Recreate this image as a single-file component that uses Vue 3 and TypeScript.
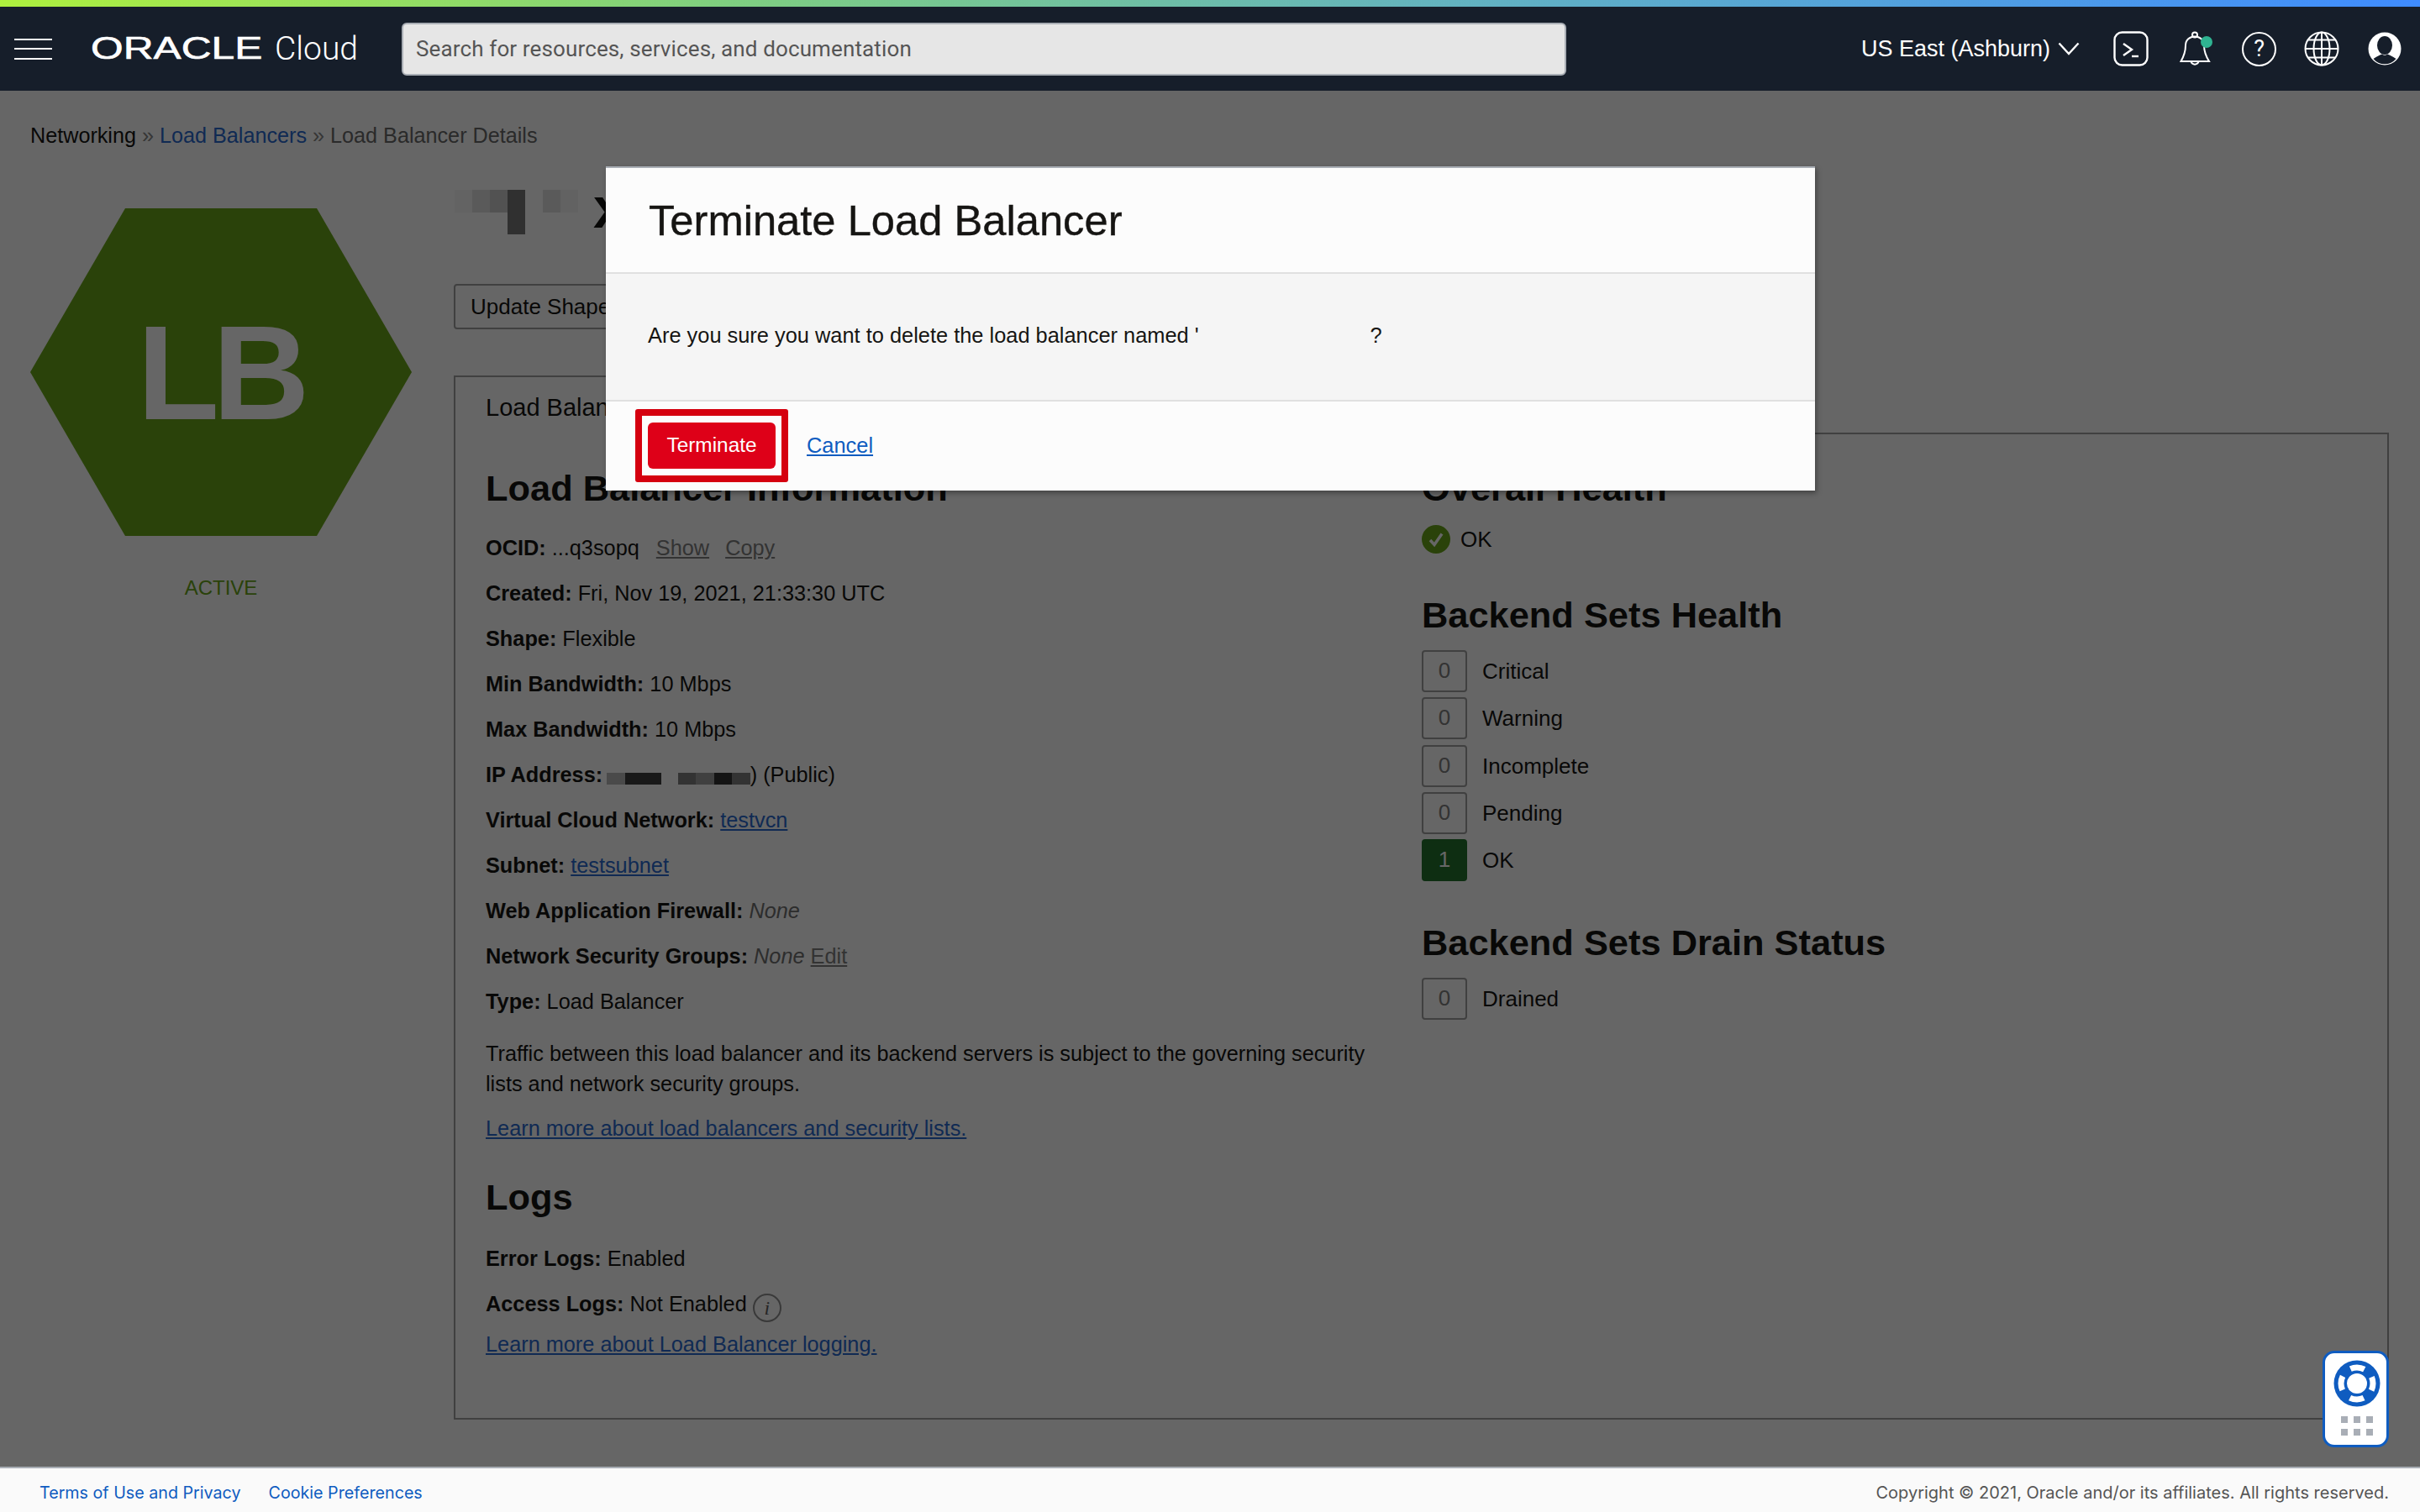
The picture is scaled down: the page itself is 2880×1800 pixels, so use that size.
<script setup lang="ts">
interface Health {
  count: number
  label: string
  ok?: boolean
}

const backendHealth: Health[] = [
  { count: 0, label: 'Critical' },
  { count: 0, label: 'Warning' },
  { count: 0, label: 'Incomplete' },
  { count: 0, label: 'Pending' },
  { count: 1, label: 'OK', ok: true },
]

const mosaic = ['#f8f8f8', '#e0e0e0', '#cdcdcd', '#787878', 'transparent', '#e0e0e0', '#f5f5f5']
const ipFirst = ['#b8b8b8', '#404040', '#404040']
const ipSecond = ['#808080', '#a0a0a0', '#333333', '#808080']
</script>

<template>
  <div class="page">
    <div class="rainbow"></div>
    <header class="topbar">
      <button class="burger" type="button" aria-label="Menu"><i></i><i></i><i></i></button>
      <div class="logo">
        <span class="logo-mark">ORACLE</span>
        <span class="logo-cloud">Cloud</span>
      </div>
      <div class="search">Search for resources, services, and documentation</div>
      <div class="top-right">
        <span class="region">US East (Ashburn)</span>
        <svg class="chevron" viewBox="0 0 26 16" width="26" height="16">
          <path d="M1.5 1.5 L13 14 L24.5 1.5" fill="none" stroke="#fff" stroke-width="2.4" />
        </svg>
        <svg class="ic ic-term" viewBox="0 0 42 42" width="42" height="42" fill="none" stroke="#fff" stroke-width="2.4">
          <rect x="1.5" y="1.5" width="39" height="39" rx="9" />
          <path d="M12 15 L22 22 L12 29" />
          <path d="M22 30 H30" />
        </svg>
        <svg class="ic ic-bell" viewBox="0 0 40 42" width="40" height="42">
          <g fill="none" stroke="#fff" stroke-width="2">
            <circle cx="18" cy="4.5" r="3" />
            <path d="M1.5 36 C6 28 7 22 7 17 C7 10.500 12 6.500 18 6.500 C24 6.500 29 10.500 29 17 C29 22 30 28 35 36 Z" />
            <path d="M13.500 36.500 A4.800 4.800 0 0 0 22.500 36.500" />
          </g>
          <circle cx="32" cy="13" r="7" fill="#2fb391" />
        </svg>
        <span class="ic-help">?</span>
        <svg class="ic ic-globe" viewBox="0 0 42 42" width="42" height="42" fill="none" stroke="#fff" stroke-width="2">
          <circle cx="21" cy="21" r="19.500" />
          <ellipse cx="21" cy="21" rx="9.500" ry="19.500" />
          <path d="M21 1.500 V40.500 M1.500 21 H40.500 M5 10.500 H37 M5 31.500 H37" />
        </svg>
        <svg class="ic ic-user" viewBox="0 0 40 40" width="40" height="40">
          <circle cx="20" cy="20" r="19.500" fill="#fff" />
          <ellipse cx="20" cy="16" rx="9" ry="11" fill="#161e2a" />
          <path d="M6.500 32 Q13 27.500 17 26.500 Q20 29 23 26.500 Q27 27.500 33.500 32 A17.500 17.500 0 0 1 6.500 32 Z" fill="#161e2a" />
        </svg>
      </div>
    </header>

    <main class="main">
      <nav class="crumbs">
        <span class="crumb-root">Networking</span>
        <span class="sep"> » </span>
        <a class="crumb-link">Load Balancers</a>
        <span class="sep"> » </span>
        <span class="crumb-current">Load Balancer Details</span>
      </nav>

      <div class="columns">
        <aside class="side">
          <svg class="hex" viewBox="0 0 454 390" width="454" height="390">
            <polygon points="113,0 341,0 454,195 341,390 113,390 0,195" fill="#69a519" />
            <text x="226" y="251" text-anchor="middle" class="hex-text">LB</text>
          </svg>
          <div class="state">ACTIVE</div>
        </aside>

        <section class="content">
          <div class="title-row">
            <span
              v-for="(c, i) in mosaic"
              :key="i"
              class="cell"
              :class="{ tall: i === 3 }"
              :style="{ background: c }"
            ></span>
            <span class="title-tail">x</span>
          </div>

          <div class="actions">
            <button class="btn" type="button">Update Shape</button>
          </div>

          <div class="tabs">
            <div class="tab">Load Balancer Information</div>
            <div class="tab-rest"></div>
          </div>

          <div class="panel">
            <div class="info-col">
              <h2>Load Balancer Information</h2>
              <p><b>OCID:</b> ...q3sopq <a class="plain ml">Show</a> <a class="plain">Copy</a></p>
              <p><b>Created:</b> Fri, Nov 19, 2021, 21:33:30 UTC</p>
              <p><b>Shape:</b> Flexible</p>
              <p><b>Min Bandwidth:</b> 10 Mbps</p>
              <p><b>Max Bandwidth:</b> 10 Mbps</p>
              <p class="ip">
                <b>IP Address:</b>
                <span class="mask first">
                  <i v-for="(c, i) in ipFirst" :key="i" :style="{ background: c }"></i>
                </span>
                <span class="mask second">
                  <i v-for="(c, i) in ipSecond" :key="i" :style="{ background: c }"></i>
                </span>) (Public)
              </p>
              <p><b>Virtual Cloud Network:</b> <a>testvcn</a></p>
              <p><b>Subnet:</b> <a>testsubnet</a></p>
              <p><b>Web Application Firewall:</b> <em>None</em></p>
              <p><b>Network Security Groups:</b> <em>None</em> <a class="plain">Edit</a></p>
              <p class="last"><b>Type:</b> Load Balancer</p>
              <p class="traffic">Traffic between this load balancer and its backend servers is subject to the governing security lists and network security groups.</p>
              <p><a>Learn more about load balancers and security lists.</a></p>
              <h2 class="logs">Logs</h2>
              <p><b>Error Logs:</b> Enabled</p>
              <p class="access"><b>Access Logs:</b> Not Enabled <span class="info-i">i</span></p>
              <p><a>Learn more about Load Balancer logging.</a></p>
            </div>

            <div class="health-col">
              <h2>Overall Health</h2>
              <div class="overall">
                <svg viewBox="0 0 34 34" width="34" height="34">
                  <circle cx="17" cy="17" r="17" fill="#69a519" />
                  <path d="M10 18 L15 23.500 L24 10.500" fill="none" stroke="#fff" stroke-width="3.500" />
                </svg>
                <span>OK</span>
              </div>

              <h2 class="sub">Backend Sets Health</h2>
              <div v-for="h in backendHealth" :key="h.label" class="health-row">
                <span class="count" :class="{ good: h.ok }">{{ h.count }}</span>
                <span>{{ h.label }}</span>
              </div>

              <h2 class="sub drain">Backend Sets Drain Status</h2>
              <div class="health-row">
                <span class="count">0</span>
                <span>Drained</span>
              </div>
            </div>
          </div>
        </section>
      </div>
    </main>

    <footer class="footer">
      <a>Terms of Use and Privacy</a>
      <a>Cookie Preferences</a>
      <span class="copy">Copyright © 2021, Oracle and/or its affiliates. All rights reserved.</span>
    </footer>

    <div class="overlay"></div>

    <div class="help-widget">
      <svg viewBox="0 0 56 56" width="56" height="56">
        <circle cx="28" cy="28" r="27.500" fill="#0f5cc0" />
        <circle cx="28" cy="28" r="19" fill="none" stroke="#fff" stroke-width="7" stroke-dasharray="17 12.850" stroke-dashoffset="8.500" />
        <circle cx="28" cy="28" r="12" fill="#fff" />
      </svg>
      <div class="dots"><i v-for="n in 6" :key="n"></i></div>
    </div>

    <div class="modal" role="dialog">
      <div class="modal-head">Terminate Load Balancer</div>
      <div class="modal-body">
        <span>Are you sure you want to delete the load balancer named '</span>
        <span class="modal-q">?</span>
      </div>
      <div class="modal-foot">
        <div class="callout">
          <button class="danger" type="button">Terminate</button>
        </div>
        <a class="cancel">Cancel</a>
      </div>
    </div>
  </div>
</template>

<style>
html,
body {
  margin: 0;
  background: #fff;
}
</style>

<style scoped>
.page {
  position: relative;
  display: flex;
  flex-direction: column;
  width: 2880px;
  height: 1800px;
  overflow: hidden;
  background: #fff;
  color: #161513;
  font-family: "Liberation Sans", Arial, sans-serif;
  font-size: 25.3px;
  line-height: 36px;
}

.rainbow {
  height: 8px;
  background: linear-gradient(90deg, #aef03e 0%, #7fcf80 30%, #63b3c0 60%, #3f8cff 100%);
}

.topbar {
  display: flex;
  align-items: center;
  height: 100px;
  padding-left: 17px;
  background: #161e2a;
  color: #fff;
}

.burger {
  display: flex;
  flex-direction: column;
  justify-content: space-between;
  width: 45px;
  height: 25px;
  padding: 0;
  border: 0;
  background: none;
}

.burger i {
  display: block;
  height: 2px;
  background: #fff;
}

.logo {
  display: flex;
  align-items: center;
  width: 370px;
  margin-left: 46px;
}

.logo-mark {
  display: inline-block;
  width: 205px;
  font-size: 36px;
  line-height: 36px;
  -webkit-text-stroke: 0.6px #fff;
  transform: scaleX(1.38);
  transform-origin: left center;
}

.logo-cloud {
  margin-left: 14px;
  font-family: Roboto, sans-serif;
  font-size: 39px;
  font-weight: 300;
}

.search {
  box-sizing: border-box;
  width: 1386px;
  height: 63px;
  padding-left: 15px;
  border: 2px solid #a9aeb5;
  border-radius: 6px;
  background: #e6e6e6;
  color: #555;
  font-family: Roboto, sans-serif;
  font-size: 26px;
  letter-spacing: 0.13px;
  line-height: 59px;
}

.top-right {
  display: flex;
  align-items: center;
  margin-left: 351px;
}

.region {
  font-size: 27px;
}

.chevron {
  margin-left: 9px;
}

.ic-term {
  margin-left: 40px;
}

.ic-bell {
  margin-left: 37px;
}

.ic-help {
  box-sizing: border-box;
  width: 41px;
  height: 41px;
  margin-left: 34px;
  border: 2px solid #fff;
  border-radius: 50%;
  font-family: Roboto, sans-serif;
  font-size: 27px;
  line-height: 37px;
  text-align: center;
}

.ic-globe {
  margin-left: 33px;
}

.ic-user {
  margin-left: 34px;
}

.main {
  flex: 1;
  min-height: 0;
  padding: 35px 37px 0 36px;
}

.crumbs {
  height: 36px;
  font-size: 25.200px;
  white-space: pre;
}

.crumb-root {
  color: #161513;
}

.sep {
  color: #888;
}

a.crumb-link {
  color: #2a6ad0;
  text-decoration: none;
}

.crumb-current {
  color: #6a6a6a;
}

.columns {
  display: flex;
}

.side {
  flex: none;
  width: 454px;
  margin: 69px 50px 0 0;
}

.hex {
  display: block;
}

.hex-text {
  fill: #fff;
  font-family: "Liberation Sans", Arial, sans-serif;
  font-size: 160px;
  font-weight: 700;
  letter-spacing: -8px;
}

.state {
  margin-top: 44px;
  color: #69a519;
  font-size: 24px;
  text-align: center;
}

.content {
  flex: 1;
  min-width: 0;
  margin-top: 47px;
}

.title-row {
  display: flex;
  align-items: flex-start;
  height: 112px;
  padding-left: 1px;
}

.cell {
  flex: none;
  width: 21px;
  height: 27px;
}

.cell.tall {
  height: 53px;
}

.title-tail {
  margin: -9px 0 0 18px;
  font-size: 68px;
  font-weight: 700;
  line-height: 60px;
}

.actions {
  height: 109px;
}

.btn {
  box-sizing: border-box;
  width: 220px;
  height: 54px;
  padding: 0 0 0 18px;
  border: 2px solid #a0a0a0;
  border-radius: 4px;
  background: #fff;
  color: #161513;
  font: inherit;
  font-size: 26px;
  text-align: left;
}

.tabs {
  display: flex;
  height: 70px;
}

.tab {
  box-sizing: border-box;
  width: 460px;
  padding: 18px 0 0 36px;
  border: solid #a0a0a0;
  border-width: 2px 2px 0;
  font-size: 29px;
}

.tab-rest {
  flex: 1;
  border-bottom: 2px solid #a0a0a0;
}

.panel {
  box-sizing: border-box;
  display: flex;
  height: 1173px;
  padding: 36px 0 0 36px;
  border: solid #a0a0a0;
  border-width: 0 2px 2px;
}

.info-col {
  flex: none;
  width: 1114px;
}

.health-col {
  flex: 1;
  font-size: 26px;
}

h2 {
  margin: 0 0 25px;
  font-size: 43.400px;
  line-height: 56px;
}

p {
  width: 1070px;
  margin: 0 0 18px;
}

.plain {
  color: #808080;
}

.ml {
  margin-left: 13px;
}

.plain + .plain {
  margin-left: 12px;
}

a {
  color: #2a6ad0;
  text-decoration: underline;
}

em {
  color: #707070;
}

.mask {
  display: inline-flex;
  vertical-align: -3px;
}

.mask i {
  display: block;
  width: 21.500px;
  height: 14px;
}

.first {
  margin-left: 5px;
}

.second {
  margin-left: 20px;
}

.last {
  margin-bottom: 26px;
}

.traffic {
  margin-bottom: 17px;
}

.logs {
  margin-top: 36px;
  margin-bottom: 27px;
}

.access {
  margin-bottom: 8px;
}

.info-i {
  display: inline-block;
  box-sizing: border-box;
  width: 34px;
  height: 34px;
  margin-left: 0;
  border: 2px solid #909090;
  border-radius: 50%;
  color: #606060;
  font-family: "Liberation Serif", serif;
  font-size: 24px;
  font-style: italic;
  line-height: 30px;
  text-align: center;
  vertical-align: -4px;
}

.overall {
  display: flex;
  align-items: center;
  gap: 12px;
  height: 34px;
  margin-top: -9px;
}

.sub {
  margin: 45px 0 14px;
}

.health-row {
  display: flex;
  align-items: center;
  gap: 18px;
  height: 50px;
  margin-bottom: 6.250px;
}

.count {
  box-sizing: border-box;
  width: 54px;
  height: 50px;
  border: 2px solid #a0a0a0;
  border-radius: 4px;
  color: #808080;
  line-height: 44px;
  text-align: center;
}

.good {
  border-color: #23732d;
  background: #23732d;
  color: #fff;
}

.drain {
  margin-top: 45px;
  margin-bottom: 14px;
}

.footer {
  position: relative;
  z-index: 3;
  display: flex;
  align-items: center;
  gap: 33px;
  box-sizing: border-box;
  height: 54px;
  padding: 6px 37px 0 47px;
  border-top: 2px solid #a9aeb5;
  background: #fafafa;
  color: #555;
  font-family: Inter, sans-serif;
  font-size: 20px;
}

.footer a {
  color: #0f5cc0;
  font-size: 19.700px;
  text-decoration: none;
}

.copy {
  margin-left: auto;
}

.overlay {
  position: absolute;
  top: 108px;
  left: 0;
  right: 0;
  bottom: 54px;
  z-index: 2;
  background: rgba(0, 0, 0, 0.6);
}

.help-widget {
  position: absolute;
  top: 1608px;
  left: 2764px;
  z-index: 3;
  box-sizing: border-box;
  width: 79px;
  height: 115px;
  padding: 8px 0 0 10px;
  border: 3px solid #0f5cc0;
  border-radius: 14px;
  background: #fff;
}

.help-widget svg {
  display: block;
}

.dots {
  display: grid;
  grid-template-columns: repeat(3, 8px);
  gap: 7px;
  margin: 11px 0 0 9px;
}

.dots i {
  display: block;
  height: 8px;
  background: #a9aeb6;
}

.modal {
  position: absolute;
  top: 198px;
  left: 721px;
  z-index: 4;
  box-sizing: border-box;
  width: 1439px;
  height: 386px;
  border-top: 2px solid #a9aeb5;
  background: #fcfcfc;
  box-shadow: 2px 3px 6px rgba(0, 0, 0, 0.35);
}

.modal-head {
  box-sizing: border-box;
  height: 126px;
  padding-left: 51px;
  border-bottom: 2px solid #e0e0e0;
  font-size: 50.700px;
  -webkit-text-stroke: 0.4px #161513;
  line-height: 126px;
}

.modal-body {
  display: flex;
  box-sizing: border-box;
  height: 152px;
  padding: 55px 0 0 50px;
  border-bottom: 2px solid #e0e0e0;
  background: #f5f5f5;
  font-size: 25.400px;
}

.modal-q {
  margin-left: 204px;
}

.modal-foot {
  display: flex;
  align-items: center;
  height: 104px;
  padding-left: 35px;
}

.callout {
  box-sizing: border-box;
  width: 182px;
  height: 87px;
  padding: 8px 7px;
  border: 8px solid #d5000f;
  border-radius: 3px;
}

.danger {
  display: block;
  width: 152px;
  height: 55px;
  padding: 0;
  border: 0;
  border-radius: 6px;
  background: #de0018;
  color: #fff;
  font-family: inherit;
  font-size: 24.400px;
}

.cancel {
  margin-left: 22px;
  color: #0f5cc0;
  font-size: 25.400px;
}
</style>
